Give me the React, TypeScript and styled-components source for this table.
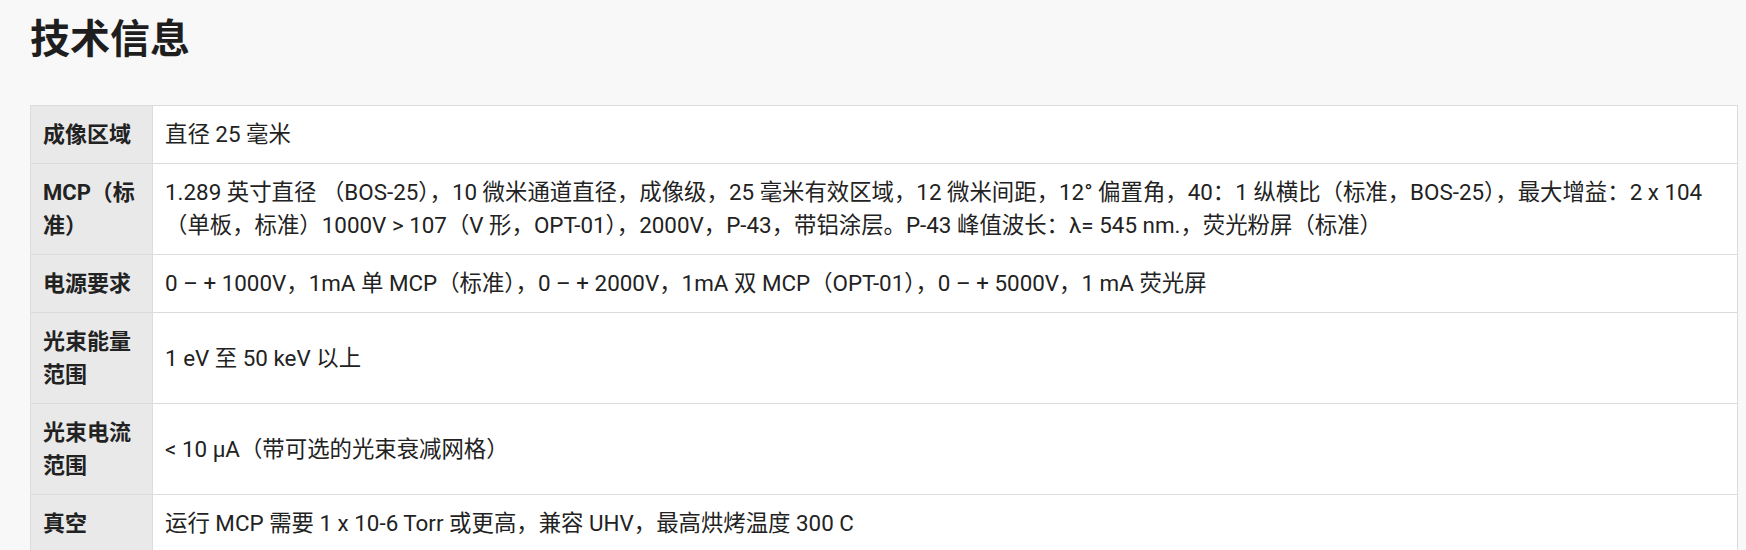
import styled, { createGlobalStyle } from 'styled-components'

const GlobalStyle = createGlobalStyle`
  html, body {
    margin: 0;
    padding: 0;
    background: #f8f8f8;
  }
  body {
    font-family: Roboto, "Noto Sans CJK SC", sans-serif;
    color: #222;
  }
`

const Page = styled.div`
  padding: 14px 8px 40px 30px;
`

const Title = styled.h2`
  margin: 0 0 39px 0;
  font-size: 40px;
  line-height: 52px;
  font-weight: 700;
  color: #1e1e1e;
`

const SpecTable = styled.div`
  display: grid;
  grid-template-columns: 122px 1fr;
  border-top: 1px solid #dcdcdc;
  border-left: 1px solid #dcdcdc;
  background: #fff;
`

const Cell = styled.div<{ $head?: boolean }>`
  display: flex;
  align-items: center;
  box-sizing: border-box;
  padding: 12px 12px;
  border-right: 1px solid #dcdcdc;
  border-bottom: 1px solid #dcdcdc;
  font-size: ${p => (p.$head ? '22px' : '22.4px')};
  line-height: 33px;
  font-weight: ${p => (p.$head ? 700 : 400)};
  background: ${p => (p.$head ? '#e9e9e9' : '#fff')};
  color: #222;
`

const specs: [string, string][] = [
  ['成像区域', '直径 25 毫米'],
  [
    'MCP（标准）',
    '1.289 英寸直径 （BOS-25），10 微米通道直径，成像级，25 毫米有效区域，12 微米间距，12° 偏置角，40：1 纵横比（标准，BOS-25），最大增益：2 x 104（单板，标准）1000V > 107（V 形，OPT-01），2000V，P-43，带铝涂层。P-43 峰值波长：λ= 545 nm.，荧光粉屏（标准）',
  ],
  ['电源要求', '0 – + 1000V，1mA 单 MCP（标准），0 – + 2000V，1mA 双 MCP（OPT-01），0 – + 5000V，1 mA 荧光屏'],
  ['光束能量范围', '1 eV 至 50 keV 以上'],
  ['光束电流范围', '< 10 µA（带可选的光束衰减网格）'],
  ['真空', '运行 MCP 需要 1 x 10-6 Torr 或更高，兼容 UHV，最高烘烤温度 300 C'],
]

export default function App() {
  return (
    <>
      <GlobalStyle />
      <Page>
        <Title>技术信息</Title>
        <SpecTable>
          {specs.map(([label, value], index) => (
            <>
              <Cell key={`h-${index}`} $head>{label}</Cell>
              <Cell key={`v-${index}`}>{value}</Cell>
            </>
          ))}
        </SpecTable>
      </Page>
    </>
  )
}
